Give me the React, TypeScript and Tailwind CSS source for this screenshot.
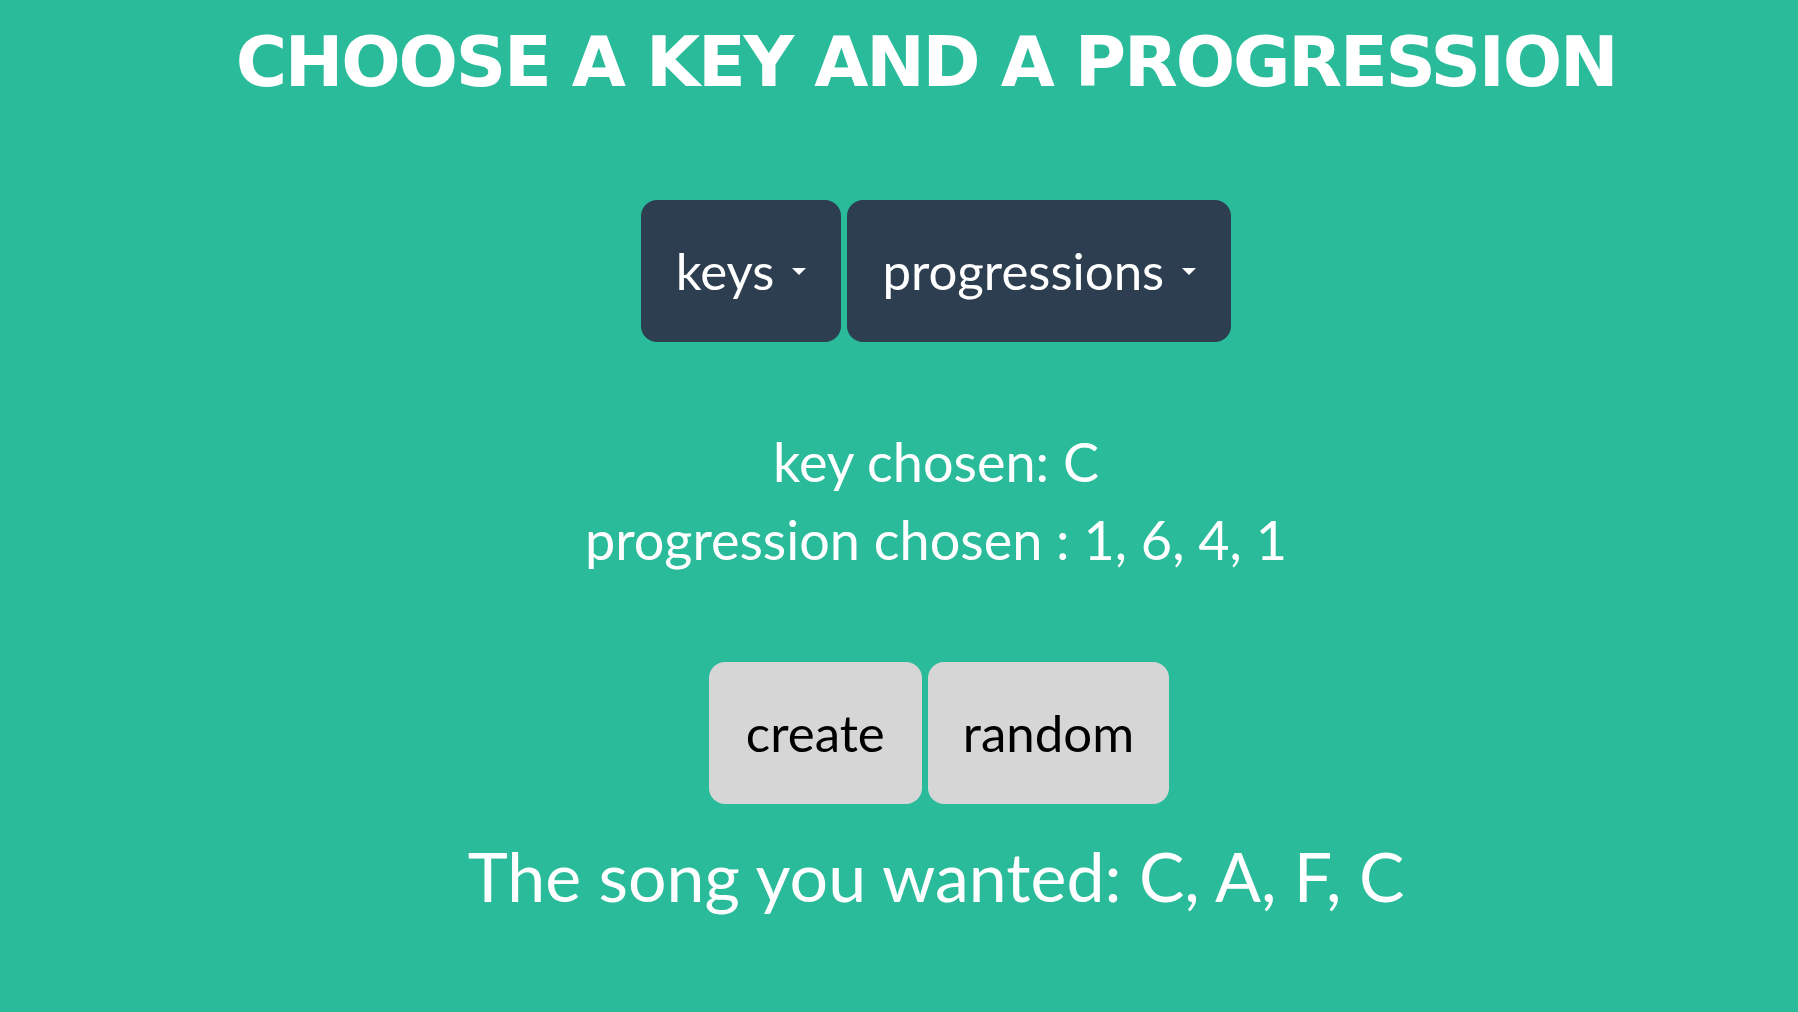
const lato = { fontFamily: '"Lato", "Liberation Sans", sans-serif' };

const Caret = () => (
  <span className="ml-[18px] inline-block w-0 h-0 border-l-[7px] border-r-[7px] border-t-[7px] border-l-transparent border-r-transparent border-t-white align-middle" />
);

export default function App() {
  return (
    <div
      className="min-h-screen w-full bg-[#2abb9b] text-white flex flex-col items-center pl-[74px]"
      style={lato}
    >
      <h1
        className="pt-[27px] pr-[20px] text-[70px] leading-[70px] font-bold uppercase tracking-[-2.2px]"
        style={{ fontFamily: '"DejaVu Sans", "Liberation Sans", sans-serif' }}
      >
        Choose a key and a progression
      </h1>

      {/* dropdowns */}
      <div className="mt-[103px] flex gap-[6px]">
        <button className="h-[142px] px-[35px] rounded-[16px] bg-[#2c3e50] text-white text-[51px] flex items-center">
          keys
          <Caret />
        </button>
        <button className="h-[142px] px-[35px] rounded-[16px] bg-[#2c3e50] text-white text-[51px] flex items-center">
          progressions
          <Caret />
        </button>
      </div>

      <div className="mt-[81px] text-[54px] leading-[78px] text-center">
        <div>key chosen: C</div>
        <div>progression chosen : 1, 6, 4, 1</div>
      </div>

      <div className="mt-[83px] flex gap-[6px] pl-[6px]">
        <button className="h-[142px] px-[37px] rounded-[16px] bg-[#d6d6d6] text-black text-[51px]">
          create
        </button>
        <button className="h-[142px] px-[35px] rounded-[16px] bg-[#d6d6d6] text-black text-[51px]">
          random
        </button>
      </div>

      <div className="mt-[29px] text-[68px] leading-[86px]">The song you wanted: C, A, F, C</div>
    </div>
  );
}
